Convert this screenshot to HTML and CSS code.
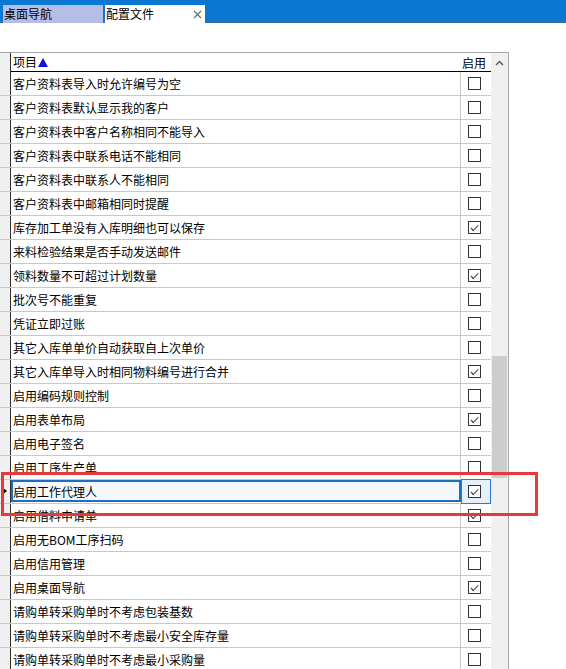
FILE: index.html
```html
<!DOCTYPE html>
<html lang="zh-CN">
<head>
<meta charset="utf-8">
<title>配置文件</title>
<link rel="stylesheet" href="styles.css">
</head>
<body>
<div class="tabbar">
  <div class="tab tab-nav">桌面导航</div>
  <div class="tab tab-active">配置文件
    <svg class="close" width="9" height="9" viewBox="0 0 9 9"><path d="M1 1L8 8M8 1L1 8" stroke="#6b6b6b" stroke-width="1.2" fill="none"/></svg>
  </div>
</div>
<div class="spacer"></div>
<div class="grid">
  <div class="table">
    <div class="row head">
      <div class="ind"></div>
      <div class="name">项目<svg class="sort" width="10" height="9" viewBox="0 0 10 9"><path d="M5 0L10 9H0Z" fill="#1010d8"/></svg></div>
      <div class="chk head-chk">启用</div>
    </div>
    <div class="row"><div class="ind"></div><div class="name">客户资料表导入时允许编号为空</div><div class="chk"><span class="box"></span></div></div>
    <div class="row"><div class="ind"></div><div class="name">客户资料表默认显示我的客户</div><div class="chk"><span class="box"></span></div></div>
    <div class="row"><div class="ind"></div><div class="name">客户资料表中客户名称相同不能导入</div><div class="chk"><span class="box"></span></div></div>
    <div class="row"><div class="ind"></div><div class="name">客户资料表中联系电话不能相同</div><div class="chk"><span class="box"></span></div></div>
    <div class="row"><div class="ind"></div><div class="name">客户资料表中联系人不能相同</div><div class="chk"><span class="box"></span></div></div>
    <div class="row"><div class="ind"></div><div class="name">客户资料表中邮箱相同时提醒</div><div class="chk"><span class="box"></span></div></div>
    <div class="row"><div class="ind"></div><div class="name">库存加工单没有入库明细也可以保存</div><div class="chk"><span class="box on"></span></div></div>
    <div class="row"><div class="ind"></div><div class="name">来料检验结果是否手动发送邮件</div><div class="chk"><span class="box"></span></div></div>
    <div class="row"><div class="ind"></div><div class="name">领料数量不可超过计划数量</div><div class="chk"><span class="box on"></span></div></div>
    <div class="row"><div class="ind"></div><div class="name">批次号不能重复</div><div class="chk"><span class="box"></span></div></div>
    <div class="row"><div class="ind"></div><div class="name">凭证立即过账</div><div class="chk"><span class="box"></span></div></div>
    <div class="row"><div class="ind"></div><div class="name">其它入库单单价自动获取自上次单价</div><div class="chk"><span class="box"></span></div></div>
    <div class="row"><div class="ind"></div><div class="name">其它入库单导入时相同物料编号进行合并</div><div class="chk"><span class="box on"></span></div></div>
    <div class="row"><div class="ind"></div><div class="name">启用编码规则控制</div><div class="chk"><span class="box"></span></div></div>
    <div class="row"><div class="ind"></div><div class="name">启用表单布局</div><div class="chk"><span class="box on"></span></div></div>
    <div class="row"><div class="ind"></div><div class="name">启用电子签名</div><div class="chk"><span class="box"></span></div></div>
    <div class="row"><div class="ind"></div><div class="name">启用工序生产单</div><div class="chk"><span class="box"></span></div></div>
    <div class="row selected"><div class="ind"><span class="arrow"></span></div><div class="name">启用工作代理人</div><div class="chk"><span class="box on"></span></div></div>
    <div class="row"><div class="ind"></div><div class="name">启用借料申请单</div><div class="chk"><span class="box on"></span></div></div>
    <div class="row"><div class="ind"></div><div class="name">启用无BOM工序扫码</div><div class="chk"><span class="box"></span></div></div>
    <div class="row"><div class="ind"></div><div class="name">启用信用管理</div><div class="chk"><span class="box"></span></div></div>
    <div class="row"><div class="ind"></div><div class="name">启用桌面导航</div><div class="chk"><span class="box on"></span></div></div>
    <div class="row"><div class="ind"></div><div class="name">请购单转采购单时不考虑包装基数</div><div class="chk"><span class="box"></span></div></div>
    <div class="row"><div class="ind"></div><div class="name">请购单转采购单时不考虑最小安全库存量</div><div class="chk"><span class="box"></span></div></div>
    <div class="row"><div class="ind"></div><div class="name">请购单转采购单时不考虑最小采购量</div><div class="chk"><span class="box"></span></div></div>
  </div>
  <div class="scrollbar">
    <svg class="up" width="9" height="6" viewBox="0 0 9 6"><path d="M1 5L4.5 1.5L8 5" stroke="#606060" stroke-width="1.5" fill="none"/></svg>
    <div class="thumb"></div>
  </div>
</div>
<div class="highlight"></div>
</body>
</html>
```
FILE: styles.css
```css
html, body {
  margin: 0;
  padding: 0;
  background: #ffffff;
  overflow: hidden;
}
body {
  font-family: "Noto Sans CJK SC", "Liberation Sans", sans-serif;
  font-size: 12px;
  color: #000;
  width: 566px;
  height: 669px;
  position: relative;
}
.tabbar {
  height: 23px;
  background: linear-gradient(#0a78d2 0, #0a78d2 21px, #3a6d8e 21px, #3a6d8e 23px);
  display: flex;
  align-items: flex-end;
  padding-left: 3px;
  gap: 2px;
}
.tab {
  height: 18px;
  width: 100px;
  line-height: 18px;
  box-sizing: border-box;
  padding-left: 1px;
  position: relative;
}
.tab-nav {
  background: #b5bde8;
}
.tab-active {
  background: #ffffff;
}
.close {
  position: absolute;
  left: 88px;
  top: 5px;
}
.spacer {
  height: 29px;
}
.grid {
  display: flex;
  width: 509px;
  height: 640px;
  border-top: 1px solid #a8a8a8;
  border-right: 1px solid #a8a8a8;
  box-sizing: border-box;
  overflow: hidden;
}
.table {
  width: 491px;
  display: flex;
  flex-direction: column;
}
.row {
  display: flex;
  height: 24px;
  flex: none;
  box-sizing: border-box;
  border-bottom: 1px solid #c8c8c8;
}
.row .ind {
  width: 10px;
  flex: none;
  background: #f0f0f0;
  border-right: 1px solid #303030;
  position: relative;
}
.row .name {
  width: 450px;
  flex: none;
  box-sizing: border-box;
  padding-left: 2px;
  line-height: 23px;
  border-right: 1px solid #c8c8c8;
  white-space: nowrap;
  display: flex;
  align-items: center;
}
.row .chk {
  flex: 1;
  display: flex;
  align-items: center;
  justify-content: center;
}
.row.head {
  height: 19px;
  border-bottom: none;
}
.row.head .name {
  border-right: none;
  border-bottom: 1px solid #000;
  line-height: 18px;
  align-items: center;
}
.row.head .chk {
  border-bottom: 1px solid #000;
  justify-content: flex-end;
  padding-right: 5px;
}
.sort {
  margin-left: 1px;
  margin-top: 1px;
}
.box {
  width: 13px;
  height: 13px;
  box-sizing: border-box;
  border: 1px solid #333;
  background: #fff;
  margin-left: -3px;
  position: relative;
}
.box.on::after {
  content: "";
  position: absolute;
  left: 3px;
  top: 1px;
  width: 6px;
  height: 3px;
  border-left: 1.5px solid #444;
  border-bottom: 1.5px solid #444;
  transform: translate(-1px, 2px) rotate(-45deg) scaleX(1.1);
  transform-origin: center;
}
.row.selected .name {
  border: 2px solid #1d6fc1;
  background: #f4f8fd;
  height: 22px;
  padding-left: 0;
}
.row.selected .chk {
  border: 1px solid #2a7ad0;
  background: #e6effc;
  margin-top: -1px;
  height: 25px;
  box-sizing: border-box;
}
.arrow {
  position: absolute;
  left: 2px;
  top: 7px;
  width: 0;
  height: 0;
  border-top: 4.5px solid transparent;
  border-bottom: 4.5px solid transparent;
  border-left: 5px solid #000;
}
.scrollbar {
  width: 17px;
  background: #f0f0f0;
  position: relative;
  flex: none;
}
.up {
  position: absolute;
  left: 4px;
  top: 7px;
}
.thumb {
  position: absolute;
  left: 1px;
  right: 1px;
  top: 303px;
  height: 122px;
  background: #cdcdcd;
}
.highlight {
  position: absolute;
  left: 1px;
  top: 472px;
  width: 537px;
  height: 44px;
  box-sizing: border-box;
  border: 3px solid #e5393c;
}
```
